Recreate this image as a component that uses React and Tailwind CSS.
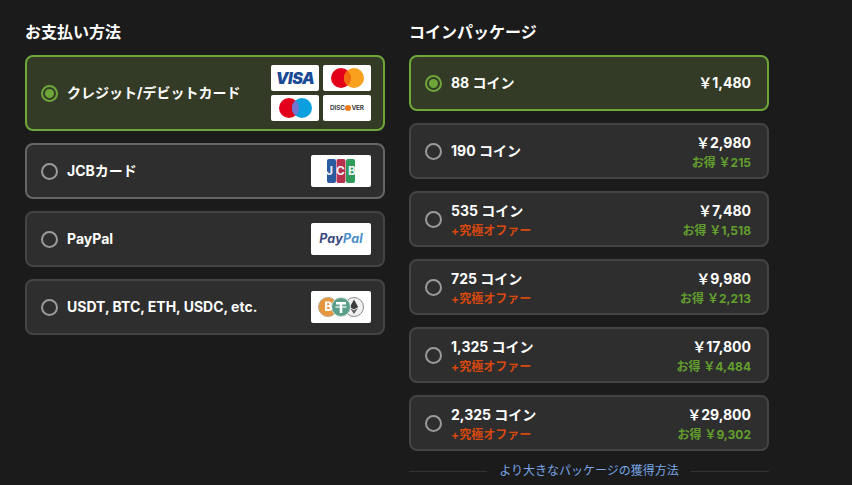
const font = { fontFamily: 'Inter, "Noto Sans CJK JP", sans-serif' };

const YEN = '\uFFE5';

const packages = [
  { coins: '88 コイン', price: '1,480', selected: true },
  { coins: '190 コイン', price: '2,980', save: '215' },
  { coins: '535 コイン', price: '7,480', save: '1,518', offer: true },
  { coins: '725 コイン', price: '9,980', save: '2,213', offer: true },
  { coins: '1,325 コイン', price: '17,800', save: '4,484', offer: true },
  { coins: '2,325 コイン', price: '29,800', save: '9,302', offer: true },
];

function Radio({ selected }) {
  if (selected) {
    return (
      <span className="flex h-[17px] w-[17px] shrink-0 items-center justify-center rounded-full border-2 border-[#6fa63a]">
        <span className="h-[9px] w-[9px] rounded-full bg-[#6fa63a]" />
      </span>
    );
  }
  return <span className="h-[17px] w-[17px] shrink-0 rounded-full border-2 border-[#9a9a9a]" />;
}

function Badge({ className, children }) {
  return (
    <div className={`flex items-center justify-center rounded-[2px] bg-white ${className}`}>
      {children}
    </div>
  );
}

function Visa() {
  return (
    <Badge className="h-[26px] w-12">
      <span className="text-[16px] font-black italic leading-none tracking-[-0.4px] text-[#1a4a94]">VISA</span>
    </Badge>
  );
}

function Circles({ left, right, mid }) {
  return (
    <Badge className="h-[26px] w-12">
      <svg width="33" height="20" viewBox="0 0 33 20">
        <circle cx="10" cy="10" r="10" fill={left} />
        <circle cx="23" cy="10" r="10" fill={right} />
        <path d="M16.500 2.400a10 10 0 0 1 0 15.200a10 10 0 0 1 0-15.200z" fill={mid} />
      </svg>
    </Badge>
  );
}

function Discover() {
  return (
    <Badge className="h-[26px] w-12">
      <span className="flex items-center text-[6.5px] font-bold leading-none tracking-[-0.2px] text-[#444]">
        DISC
        <span className="mx-[0.5px] h-[5.5px] w-[5.5px] rounded-full bg-[#ee7a1c]" />
        VER
      </span>
    </Badge>
  );
}

function Jcb() {
  return (
    <Badge className="relative h-8 w-[60px]">
      <svg width="28" height="24" viewBox="0 0 28 24">
        <rect x="0" y="0" width="9" height="24" rx="2" fill="#2a5b9f" />
        <rect x="9.500" y="0" width="9" height="24" rx="2" fill="#b8304f" />
        <rect x="19" y="0" width="9" height="24" rx="2" fill="#2f9a5a" />
      </svg>
      <span className="absolute inset-0 flex items-center justify-center gap-[3px] text-xs font-bold leading-none text-[#eef2f6]">
        <span>J</span><span>C</span><span>B</span>
      </span>
    </Badge>
  );
}

function PayPal() {
  return (
    <Badge className="h-8 w-[60px]">
      <span className="text-[12.5px] font-bold italic leading-none tracking-[0.2px]">
        <span className="text-[#3a4a80]">Pay</span>
        <span className="text-[#4a90c8]">Pal</span>
      </span>
    </Badge>
  );
}

function Crypto() {
  return (
    <Badge className="h-8 w-[60px]">
      <svg width="46" height="20" viewBox="0 0 46 20">
        <circle cx="10" cy="10" r="9.500" fill="#e8963e" stroke="#b8a98c" strokeWidth="1" />
        <circle cx="36" cy="10" r="9.500" fill="#f2f2f2" stroke="#8a8a8a" strokeWidth="1" />
        <path d="M36 2.500l4.200 7.500-4.200 2.500-4.200-2.500z" fill="#3c3c3c" />
        <path d="M32 11l4 6 4-6-4 2.400z" fill="#5a5a5a" />
        <circle cx="23" cy="10" r="9.500" fill="#5b9e8a" stroke="#d8e6e0" strokeWidth="1" />
        <path d="M18 5h10v2.400h-3.700V16h-2.600V7.400H18z" fill="#fff" />
        <path d="M17.500 10h11" stroke="#fff" strokeWidth="1.200" />
        <path d="M7 4.500h3.900c1.800 0 2.800.9 2.800 2.400 0 1-.5 1.700-1.200 2 1 .3 1.700 1.200 1.700 2.300 0 1.700-1.300 2.800-3.200 2.800H7zm2.100 1.800v2h1.300c.7 0 1-.4 1-1s-.3-1-1-1zm0 3.600v2.200h1.600c.8 0 1.100-.4 1.100-1.100s-.3-1.100-1.100-1.100z" fill="#fff" />
      </svg>
    </Badge>
  );
}

function Method({ label, selected, hovered, children }) {
  const border = selected ? 'h-[76px] border-[#6fa63a] bg-[#333b26]' : hovered ? 'h-14 border-[#666] bg-[#2e2e2e]' : 'h-14 border-[#444] bg-[#2e2e2e]';
  return (
    <div className={`flex items-center justify-between rounded-lg border-2 pl-[14px] pr-3 ${border}`}>
      <div className="flex items-center gap-[9px]">
        <Radio selected={selected} />
        <span className="text-sm font-bold text-white">{label}</span>
      </div>
      {children}
    </div>
  );
}

function Package({ coins, price, save, offer, selected }) {
  return (
    <div className={`flex h-14 items-center rounded-lg border-2 pl-[14px] pr-4 ${selected ? 'border-[#6fa63a] bg-[#333b26]' : 'border-[#444] bg-[#2e2e2e]'}`}>
      <Radio selected={selected} />
      <div className={`ml-[9px] flex-1 ${offer ? 'pt-[3px]' : ''}`}>
        <div className="text-sm font-bold leading-5 text-white">{coins}</div>
        {offer && <div className="text-xs font-bold leading-[19px] text-[#d9480f]">+究極オファー</div>}
      </div>
      <div className={`text-right ${save ? 'pt-[3px]' : ''}`}>
        <div className="text-sm font-bold leading-5 text-white">{YEN}{price}</div>
        {save && <div className="text-xs font-bold leading-[19px] text-[#639f2e]">お得 {YEN}{save}</div>}
      </div>
    </div>
  );
}

export default function App() {
  return (
    <div style={font} className="flex h-[485px] w-[852px] gap-6 overflow-hidden bg-[#1b1b1b] pl-[25px] pt-[22px]">
      <div className="w-[360px]">
        <h2 className="mb-[13px] text-base font-bold leading-5 text-white">お支払い方法</h2>
        <div className="flex flex-col gap-3">
          <Method label="クレジット/デビットカード" selected>
            <div className="grid grid-cols-2 gap-[4px]">
              <Visa />
              <Circles left="#e3001b" right="#f9a01e" mid="#f26a10" />
              <Circles left="#e3001b" right="#0a9fdf" mid="#7375cf" />
              <Discover />
            </div>
          </Method>
          <Method label="JCBカード" hovered>
            <Jcb />
          </Method>
          <Method label="PayPal">
            <PayPal />
          </Method>
          <Method label="USDT, BTC, ETH, USDC, etc.">
            <Crypto />
          </Method>
        </div>
      </div>

      <div className="w-[360px]">
        <h2 className="mb-[13px] text-base font-bold leading-5 text-white">コインパッケージ</h2>
        <div className="flex flex-col gap-3">
          {packages.map((p) => (
            <Package key={p.coins} {...p} />
          ))}
        </div>
        <div className="mt-[10px] flex items-center gap-3">
          <div className="h-px flex-1 bg-[#333]" />
          <span className="text-xs leading-5 text-[#78a6e6]">より大きなパッケージの獲得方法</span>
          <div className="h-px flex-1 bg-[#333]" />
        </div>
      </div>
    </div>
  );
}
